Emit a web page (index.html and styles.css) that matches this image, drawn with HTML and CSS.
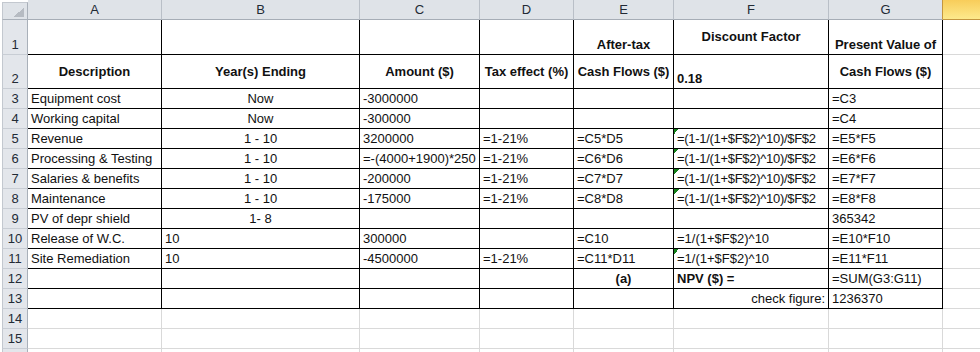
FILE: index.html
```html
<!DOCTYPE html>
<html>
<head>
<meta charset="utf-8">
<link rel="stylesheet" href="styles.css">
</head>
<body>
<div class="sheet">
  <!-- column headers -->
  <div class="corner"></div>
  <div class="ch">A</div>
  <div class="ch">B</div>
  <div class="ch">C</div>
  <div class="ch">D</div>
  <div class="ch">E</div>
  <div class="ch">F</div>
  <div class="ch ch-g">G</div>
  <div class="ch ch-sel"></div>

  <!-- row 1 -->
  <div class="rh">1</div>
  <div class="c b"></div>
  <div class="c b"></div>
  <div class="c b"></div>
  <div class="c b"></div>
  <div class="c b bold center">After-tax</div>
  <div class="c b bold center mid">Discount Factor</div>
  <div class="c b bold center">Present Value of</div>
  <div class="c h"></div>

  <!-- row 2 -->
  <div class="rh">2</div>
  <div class="c b bold center mid">Description</div>
  <div class="c b bold center mid">Year(s) Ending</div>
  <div class="c b bold center mid">Amount ($)</div>
  <div class="c b bold center mid">Tax effect (%)</div>
  <div class="c b bold center mid">Cash Flows ($)</div>
  <div class="c b bold">0.18</div>
  <div class="c b bold center mid">Cash Flows ($)</div>
  <div class="c h"></div>

  <!-- row 3 -->
  <div class="rh">3</div>
  <div class="c b">Equipment cost</div>
  <div class="c b center">Now</div>
  <div class="c b">-3000000</div>
  <div class="c b"></div>
  <div class="c b"></div>
  <div class="c b"></div>
  <div class="c b">=C3</div>
  <div class="c h"></div>

  <!-- row 4 -->
  <div class="rh">4</div>
  <div class="c b">Working capital</div>
  <div class="c b center">Now</div>
  <div class="c b">-300000</div>
  <div class="c b"></div>
  <div class="c b"></div>
  <div class="c b"></div>
  <div class="c b">=C4</div>
  <div class="c h"></div>

  <!-- row 5 -->
  <div class="rh">5</div>
  <div class="c b">Revenue</div>
  <div class="c b center">1 - 10</div>
  <div class="c b">3200000</div>
  <div class="c b">=1-21%</div>
  <div class="c b">=C5*D5</div>
  <div class="c b err narrow">=(1-1/(1+$F$2)^10)/$F$2</div>
  <div class="c b">=E5*F5</div>
  <div class="c h"></div>

  <!-- row 6 -->
  <div class="rh">6</div>
  <div class="c b">Processing &amp; Testing</div>
  <div class="c b center">1 - 10</div>
  <div class="c b">=-(4000+1900)*250</div>
  <div class="c b">=1-21%</div>
  <div class="c b">=C6*D6</div>
  <div class="c b err narrow">=(1-1/(1+$F$2)^10)/$F$2</div>
  <div class="c b">=E6*F6</div>
  <div class="c h"></div>

  <!-- row 7 -->
  <div class="rh">7</div>
  <div class="c b">Salaries &amp; benefits</div>
  <div class="c b center">1 - 10</div>
  <div class="c b">-200000</div>
  <div class="c b">=1-21%</div>
  <div class="c b">=C7*D7</div>
  <div class="c b err narrow">=(1-1/(1+$F$2)^10)/$F$2</div>
  <div class="c b">=E7*F7</div>
  <div class="c h"></div>

  <!-- row 8 -->
  <div class="rh">8</div>
  <div class="c b">Maintenance</div>
  <div class="c b center">1 - 10</div>
  <div class="c b">-175000</div>
  <div class="c b">=1-21%</div>
  <div class="c b">=C8*D8</div>
  <div class="c b err narrow">=(1-1/(1+$F$2)^10)/$F$2</div>
  <div class="c b">=E8*F8</div>
  <div class="c h"></div>

  <!-- row 9 -->
  <div class="rh">9</div>
  <div class="c b">PV of depr shield</div>
  <div class="c b center">1- 8</div>
  <div class="c b"></div>
  <div class="c b"></div>
  <div class="c b"></div>
  <div class="c b"></div>
  <div class="c b">365342</div>
  <div class="c h"></div>

  <!-- row 10 -->
  <div class="rh">10</div>
  <div class="c b">Release of W.C.</div>
  <div class="c b">10</div>
  <div class="c b">300000</div>
  <div class="c b"></div>
  <div class="c b">=C10</div>
  <div class="c b">=1/(1+$F$2)^10</div>
  <div class="c b">=E10*F10</div>
  <div class="c h"></div>

  <!-- row 11 -->
  <div class="rh">11</div>
  <div class="c b">Site Remediation</div>
  <div class="c b">10</div>
  <div class="c b">-4500000</div>
  <div class="c b">=1-21%</div>
  <div class="c b">=C11*D11</div>
  <div class="c b err">=1/(1+$F$2)^10</div>
  <div class="c b">=E11*F11</div>
  <div class="c h"></div>

  <!-- row 12 -->
  <div class="rh">12</div>
  <div class="c b"></div>
  <div class="c b"></div>
  <div class="c b"></div>
  <div class="c b"></div>
  <div class="c b bold center">(a)</div>
  <div class="c b bold">NPV ($) =</div>
  <div class="c b">=SUM(G3:G11)</div>
  <div class="c h"></div>

  <!-- row 13 -->
  <div class="rh">13</div>
  <div class="c b"></div>
  <div class="c b"></div>
  <div class="c b"></div>
  <div class="c b"></div>
  <div class="c b"></div>
  <div class="c b right">check figure:</div>
  <div class="c b">1236370</div>
  <div class="c h"></div>

  <!-- row 14 -->
  <div class="rh">14</div>
  <div class="c"></div>
  <div class="c"></div>
  <div class="c"></div>
  <div class="c"></div>
  <div class="c"></div>
  <div class="c"></div>
  <div class="c"></div>
  <div class="c h"></div>

  <!-- row 15 -->
  <div class="rh">15</div>
  <div class="c"></div>
  <div class="c"></div>
  <div class="c"></div>
  <div class="c"></div>
  <div class="c"></div>
  <div class="c"></div>
  <div class="c"></div>
  <div class="c h"></div>

  <!-- row 16 (partial, clipped by the window) -->
  <div class="rh"></div>
  <div class="c"></div>
  <div class="c"></div>
  <div class="c"></div>
  <div class="c"></div>
  <div class="c"></div>
  <div class="c"></div>
  <div class="c"></div>
  <div class="c h"></div>
</div>
</body>
</html>
```
FILE: styles.css
```css
html, body {
  margin: 0;
  padding: 0;
  background: #ffffff;
  overflow: hidden;
}

.sheet {
  display: grid;
  grid-template-columns: 28px 134px 198px 120px 94px 100px 155px 114px 37px;
  grid-template-rows: 20px 35px 34px repeat(14, 20px);
  width: 980px;
  height: 352px;
  overflow: hidden;
  font-family: "Liberation Sans", Arial, sans-serif;
  font-size: 13px;
  line-height: 16px;
  color: #111111;
}

.sheet > div {
  box-sizing: border-box;
  min-width: 0;
  white-space: nowrap;
  overflow: hidden;
}

/* top-left corner */
.corner {
  margin: 2px 0 0 2px;
  border-left: 1px solid #c3c8cf;
  border-top: 1px solid #c3c8cf;
  border-right: 1px solid #a9b0b9;
  border-bottom: 1px solid #a9b0b9;
  background:
    linear-gradient(to bottom right, transparent 50%, #b6bbc2 50%) no-repeat right 3px bottom 2px / 11px 9px,
    #dfe3e8;
}

/* column headers */
.ch {
  display: flex;
  align-items: center;
  justify-content: center;
  padding-top: 1px;
  background: #dfe3e8;
  border-right: 1px solid #b9bfc7;
  border-bottom: 1px solid #a6adb6;
  color: #222a35;
}

.ch-g {
  border-right-color: #c4963f;
}

.ch-sel {
  background: linear-gradient(#f8cd5a, #fde98c);
  border-right: none;
  border-bottom: 1px solid #c4963f;
}

/* row headers */
.rh {
  margin-left: 2px;
  display: flex;
  align-items: flex-end;
  justify-content: center;
  padding-bottom: 1px;
  background: #e3e6eb;
  border-left: 1px solid #c3c8cf;
  border-right: 1px solid #a9b0b9;
  border-bottom: 1px solid #c8cdd4;
  color: #222a35;
}

/* cells */
.c {
  display: flex;
  align-items: flex-end;
  justify-content: flex-start;
  padding: 0 3px 1px 3px;
  border-right: 1px solid #d9d9d9;
  border-bottom: 1px solid #d9d9d9;
}

.c.b {
  border-right-color: #000000;
  border-bottom-color: #000000;
}

.c.h {
  border-right: none;
}

.bold {
  font-weight: bold;
}

.center {
  justify-content: center;
}

.right {
  justify-content: flex-end;
}

.mid {
  align-items: center;
  padding-bottom: 0;
}

.narrow {
  letter-spacing: -0.3px;
}

.err {
  background: linear-gradient(to bottom right, #13801a 50%, transparent 50%) no-repeat 0 0 / 5px 5px;
}
```
